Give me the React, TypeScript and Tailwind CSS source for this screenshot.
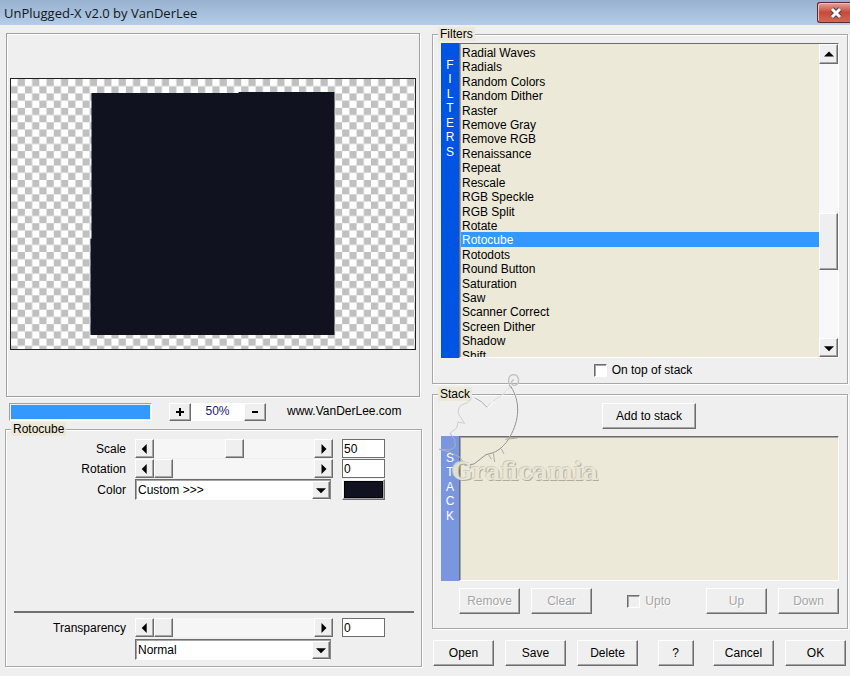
"use client"

import { useState, type ReactNode } from "react"
import { clsx } from "clsx"

const FILTERS = [
  "Radial Waves",
  "Radials",
  "Random Colors",
  "Random Dither",
  "Raster",
  "Remove Gray",
  "Remove RGB",
  "Renaissance",
  "Repeat",
  "Rescale",
  "RGB Speckle",
  "RGB Split",
  "Rotate",
  "Rotocube",
  "Rotodots",
  "Round Button",
  "Saturation",
  "Saw",
  "Scanner Correct",
  "Screen Dither",
  "Shadow",
  "Shift",
]

const RAISED =
  "bg-[#efefef] border border-t-white border-l-white border-r-[#6d6d6d] border-b-[#6d6d6d] shadow-[inset_-1px_-1px_0_#a5a5a5]"

type Direction = "left" | "right" | "up" | "down"

const ARROWS: Record<Direction, string> = {
  left: "M8 0v12L2 6z",
  right: "M3 0v12l6-6z",
  up: "M0 9h12L6 3z",
  down: "M0 4h12l-6 6z",
}

function Arrow({ direction }: { direction: Direction }) {
  return (
    <svg viewBox="0 0 12 12" className="h-[10px] w-[10px]" aria-hidden="true">
      <path d={ARROWS[direction]} fill="#000" />
    </svg>
  )
}

function PushButton({
  children,
  className,
  disabled,
}: {
  children: ReactNode
  className?: string
  disabled?: boolean
}) {
  return (
    <button
      type="button"
      disabled={disabled}
      className={clsx(
        RAISED,
        "flex h-[26px] items-center justify-center disabled:text-[#a5a5a5] disabled:[text-shadow:1px_1px_0_white]",
        className ?? "w-[61px]",
      )}
    >
      {children}
    </button>
  )
}

function Group({ title, children, className }: { title: string; children: ReactNode; className?: string }) {
  return (
    <fieldset className="min-w-0 border border-[#a8a8a8] shadow-[1px_1px_0_white,inset_1px_1px_0_white]">
      <legend className="ml-[5px] h-[14px] bg-[#ece9d8] px-[2px] leading-[14px]">{title}</legend>
      <div className={className}>{children}</div>
    </fieldset>
  )
}

function SliderRow({ id, label, initial }: { id: string; label: string; initial: number }) {
  const [value, setValue] = useState(initial)
  const clamp = (n: number) => Math.max(0, Math.min(100, n || 0))

  return (
    <>
      <label htmlFor={id} className="text-right">
        {label}
      </label>
      <div className="flex h-[19px]">
        <button
          type="button"
          aria-label={`Decrease ${label}`}
          onClick={() => setValue(clamp(value - 1))}
          className={clsx(RAISED, "flex w-[19px] shrink-0 items-center justify-center")}
        >
          <Arrow direction="left" />
        </button>
        <input
          id={id}
          type="range"
          value={value}
          onChange={(e) => setValue(Number(e.target.value))}
          className="h-full w-0 flex-1 appearance-none bg-[#f6f6f6] [&::-webkit-slider-thumb]:h-[19px] [&::-webkit-slider-thumb]:w-[19px] [&::-webkit-slider-thumb]:appearance-none [&::-webkit-slider-thumb]:border [&::-webkit-slider-thumb]:border-t-white [&::-webkit-slider-thumb]:border-l-white [&::-webkit-slider-thumb]:border-r-[#6d6d6d] [&::-webkit-slider-thumb]:border-b-[#6d6d6d] [&::-webkit-slider-thumb]:bg-[#efefef] [&::-webkit-slider-thumb]:shadow-[inset_-1px_-1px_0_#a5a5a5]"
        />
        <button
          type="button"
          aria-label={`Increase ${label}`}
          onClick={() => setValue(clamp(value + 1))}
          className={clsx(RAISED, "flex w-[19px] shrink-0 items-center justify-center")}
        >
          <Arrow direction="right" />
        </button>
      </div>
      <input
        type="text"
        aria-label={`${label} value`}
        value={value}
        onChange={(e) => setValue(clamp(Number(e.target.value)))}
        className="h-[19px] w-full border border-[#6d6d6d] bg-white px-px"
      />
    </>
  )
}

function Dropdown({ id, label, options }: { id: string; label: string; options: string[] }) {
  return (
    <div className="relative mr-[2px] h-[21px] border border-t-[#6d6d6d] border-l-[#6d6d6d] border-r-[#8a8a8a] border-b-white bg-white shadow-[inset_1px_1px_0_#a5a5a5]">
      <select id={id} aria-label={label} className="h-full w-full appearance-none bg-transparent pl-[2px] outline-none">
        {options.map((o) => (
          <option key={o}>{o}</option>
        ))}
      </select>
      <span
        className={clsx(
          RAISED,
          "pointer-events-none absolute top-px right-0 bottom-0 flex w-[18px] items-center justify-center",
        )}
      >
        <Arrow direction="down" />
      </span>
    </div>
  )
}

// Coloured bar with its word written downwards, one letter per row
function Strip({ word, className, wordClassName }: { word: string; className: string; wordClassName: string }) {
  return (
    <div className={clsx("w-[18px] shrink-0 pt-[15px] text-white", className)}>
      <div className={clsx("grid auto-rows-fr justify-items-center", wordClassName)}>
        {word.split("").map((letter, i) => (
          <span key={i}>{letter}</span>
        ))}
      </div>
    </div>
  )
}

function Preview() {
  return (
    <div className="mr-[2px] ml-px flex h-[364px] items-center border border-[#a0a0a0] px-[3px] pb-[3px] shadow-[1px_1px_0_white,inset_1px_1px_0_white]">
      <svg
        viewBox="0 0 405 270"
        preserveAspectRatio="xMidYMid slice"
        className="h-[272px] w-full border border-[#202020]"
        role="img"
        aria-label="Preview"
      >
        <defs>
          <pattern id="checker" width="14.42" height="14.42" patternUnits="userSpaceOnUse">
            <rect width="14.42" height="14.42" fill="#fff" />
            <path d="M7.21 0h7.21v7.21H7.21zM0 7.21h7.21v7.21H0z" fill="#c0c0c0" />
          </pattern>
        </defs>
        <rect width="405" height="270" fill="url(#checker)" />
        <path d="M81 14h147v-1h96v243H80v-96h1z" fill="#101220" />
      </svg>
    </div>
  )
}

// Embossed fairy outline with the site name under it
function Watermark() {
  return (
    <div className="pointer-events-none absolute -top-[17px] -left-[2px]">
      <svg viewBox="0 0 420 300" className="h-[100px] w-[140px]" fill="none" aria-hidden="true">
        <path d="M247 53C275 100 268 170 214 238M132 86Q157 94 174 113L236 58" stroke="#fff" strokeWidth="3" opacity="0.8" />
        <path
          d="M244 54C232 40 232 16 250 14C268 14 272 42 254 46C242 46 242 30 252 30"
          stroke="#c0c0c0"
          strokeWidth="4"
        />
        <path
          d="M243 50C272 96 268 150 240 200C226 226 208 240 190 248L168 254L132 282L104 286"
          stroke="#909090"
          strokeWidth="3"
        />
        <path d="M134 84Q156 92 171 112" stroke="#a8a8a8" strokeWidth="3" />
        <path d="M171 112L182 98M190 94L210 80L238 54" stroke="#d8d8d8" strokeWidth="3" />
        <path d="M124 84L112 98L92 106Q80 120 88 136L104 160L84 156L80 174L60 190" stroke="#cecece" strokeWidth="3" />
        <path d="M60 190L74 208L76 230L60 240L28 238L58 246L90 262L108 288" stroke="#a9b0c4" strokeWidth="3" />
        <path d="M226 208L262 204M214 236L222 252M190 250L194 276M176 254L184 268" stroke="#b0ada0" strokeWidth="3" />
      </svg>
      <p className="-mt-[12px] ml-[22px] font-['DejaVu_Serif',serif] text-[24px] leading-[28px] font-bold text-[#e9e6d6] opacity-90 [text-shadow:1px_1px_0_#a9a698,-1px_-1px_0_#cfccbe]">
        Graficamia
      </p>
    </div>
  )
}

export default function App() {
  const [selected, setSelected] = useState("Rotocube")

  return (
    <div className="flex min-h-screen flex-col bg-[#efefef] font-['Liberation_Sans',Arial,sans-serif] text-[12px] leading-[14px] text-black">
      <header className="flex h-[25px] items-start justify-between bg-linear-to-b from-[#97b1cf] to-[#b4cde8] pl-[4px]">
        <h1 className="font-['Open_Sans',sans-serif] text-[13px] leading-[26px] text-[#101820]">
          UnPlugged-X v2.0 by VanDerLee
        </h1>
        <button
          type="button"
          aria-label="Close"
          className="mt-[2px] flex h-[21px] w-[33px] items-center justify-center rounded-l-[3px] border border-r-0 border-[#5b2a30] bg-linear-to-b from-[#e0a197] via-[#c8483a] via-50% to-[#cf6a55] pl-[3px] shadow-[inset_1px_1px_0_#ecc0b8]"
        >
          <svg viewBox="0 0 14 12" className="h-[12px] w-[14px]" aria-hidden="true">
            <path d="M3 2l8 8M11 2l-8 8" stroke="#5a3a48" strokeWidth="5" />
            <path d="M3 2l8 8M11 2l-8 8" stroke="#fff" strokeWidth="3" />
          </svg>
        </button>
      </header>

      <main className="grid grid-cols-[417fr_416fr] gap-[10px] pt-[2px] pr-[2px] pl-[5px]">
        {/* Preview and filter settings */}
        <section className="flex min-w-0 flex-col pt-[6px]">
          <Preview />

          <div className="flex h-[25px] items-start pt-[6px] pl-[4px]">
            <div
              role="progressbar"
              aria-label="Progress"
              aria-valuenow={100}
              className="h-[18px] w-[143px] border border-t-[#a0a0a0] border-l-[#a0a0a0] border-r-white border-b-white p-px"
            >
              <div className="h-full bg-[#3399ff]" />
            </div>
            <div className="ml-[17px] flex h-[18px] w-[97px]">
              <button type="button" aria-label="Zoom in" className={clsx(RAISED, "flex w-[22px] items-center justify-center")}>
                <svg viewBox="0 0 8 8" className="h-[8px] w-[8px]" aria-hidden="true">
                  <path d="M4 0v8M0 4h8" stroke="#000" strokeWidth="2" />
                </svg>
              </button>
              <output className="flex-1 bg-white text-center leading-[17px] text-[#1a1a6e]">50%</output>
              <button type="button" aria-label="Zoom out" className={clsx(RAISED, "flex w-[22px] items-center justify-center")}>
                <svg viewBox="0 0 8 8" className="h-[8px] w-[8px]" aria-hidden="true">
                  <path d="M1 4h6" stroke="#000" strokeWidth="2" />
                </svg>
              </button>
            </div>
            <a href="#" className="ml-[21px] leading-[16px]">
              www.VanDerLee.com
            </a>
          </div>

          <Group title="Rotocube" className="flex min-h-[230px] flex-col">
            <div className="grid grid-cols-[120px_1fr_43px] items-center gap-x-[9px] gap-y-px pt-[3px] pr-[36px]">
              <SliderRow id="scale" label="Scale" initial={50} />
              <SliderRow id="rotation" label="Rotation" initial={0} />
              <label htmlFor="color" className="text-right">
                Color
              </label>
              <Dropdown id="color" label="Color" options={["Custom >>>"]} />
              <button type="button" aria-label="Pick color" className={clsx(RAISED, "h-[21px] p-px")}>
                <span className="block h-full border border-black bg-[#101220]" />
              </button>
            </div>

            <hr className="mt-auto mr-[7px] ml-[8px] border-t-2 border-[#707070]" />
            <div className="grid grid-cols-[120px_1fr_43px] items-center gap-x-[9px] gap-y-[2px] pt-[5px] pr-[36px] pb-[6px]">
              <SliderRow id="transparency" label="Transparency" initial={0} />
              <div className="col-start-2">
                <Dropdown id="blend" label="Blend mode" options={["Normal"]} />
              </div>
            </div>
          </Group>
        </section>

        {/* Filter list and stack */}
        <section className="flex min-w-0 flex-col">
          <Group title="Filters" className="px-[8px] pt-[2px] pb-px">
            <div className="flex h-[315px]">
              <Strip word="FILTERS" className="bg-[#0054e3]" wordClassName="h-[101px]" />
              <div className="flex min-w-0 flex-1 border border-t-[#6d6d6d] border-l-[#6d6d6d] border-r-white border-b-white bg-[#ece9d8]">
                <div className="min-w-0 flex-1 overflow-hidden border-l border-[#a5a5a5] pt-px">
                  <ul
                    role="listbox"
                    aria-label="Filters"
                    className="grid h-[317px] grid-rows-[repeat(22,minmax(0,1fr))] leading-[16px]"
                  >
                    {FILTERS.map((name) => (
                      <li
                        key={name}
                        role="option"
                        aria-selected={name === selected}
                        onClick={() => setSelected(name)}
                        className={clsx("pl-px", name === selected && "bg-[#3399ff] text-white")}
                      >
                        {name}
                      </li>
                    ))}
                  </ul>
                </div>
                <div className="flex w-[19px] shrink-0 flex-col bg-[#f8f8f8]">
                  <button type="button" aria-label="Scroll up" className={clsx(RAISED, "flex h-[20px] items-center justify-center")}>
                    <Arrow direction="up" />
                  </button>
                  <div className="flex-[149]" />
                  <div className={clsx(RAISED, "h-[57px]")} />
                  <div className="flex-[68]" />
                  <button type="button" aria-label="Scroll down" className={clsx(RAISED, "flex h-[19px] items-center justify-center")}>
                    <Arrow direction="down" />
                  </button>
                </div>
              </div>
            </div>
            <label className="flex h-[24px] items-center justify-center gap-[5px] pl-[6px]">
              <input
                type="checkbox"
                className="h-[13px] w-[13px] appearance-none border border-t-[#6d6d6d] border-l-[#6d6d6d] border-r-white border-b-white bg-white shadow-[inset_1px_1px_0_#a5a5a5] checked:bg-[#3399ff]"
              />
              On top of stack
            </label>
          </Group>

          <div className="relative mt-[3px]">
            <Group title="Stack" className="px-[8px] pt-[2px] pb-[14px]">
              <div className="flex justify-center pl-[18px]">
                <PushButton className="w-[94px]">Add to stack</PushButton>
              </div>
              <div className="mt-[7px] flex h-[145px]">
                <Strip word="STACK" className="bg-[#7a96df]" wordClassName="h-[72px]" />
                <div
                  role="listbox"
                  aria-label="Stack"
                  className="flex-1 border border-t-[#6d6d6d] border-l-[#6d6d6d] border-r-white border-b-white bg-[#ece9d8] shadow-[inset_1px_1px_0_#a5a5a5]"
                />
              </div>
              <div className="mt-[7px] flex items-center gap-[11px] pl-[18px]">
                <PushButton disabled>Remove</PushButton>
                <PushButton disabled>Clear</PushButton>
                <label className="mx-auto flex items-center gap-[5px] text-[#a5a5a5] [text-shadow:1px_1px_0_white]">
                  <input
                    type="checkbox"
                    disabled
                    className="h-[13px] w-[13px] appearance-none border border-t-[#6d6d6d] border-l-[#6d6d6d] border-r-white border-b-white shadow-[inset_1px_1px_0_#a5a5a5]"
                  />
                  Upto
                </label>
                <PushButton disabled>Up</PushButton>
                <PushButton disabled>Down</PushButton>
              </div>
            </Group>
            <Watermark />
          </div>

          <div className="flex justify-between pt-[11px] pr-[2px] pl-px">
            <div className="flex gap-[11px]">
              <PushButton>Open</PushButton>
              <PushButton>Save</PushButton>
              <PushButton>Delete</PushButton>
            </div>
            <PushButton className="w-[36px]">?</PushButton>
            <div className="flex gap-[11px]">
              <PushButton>Cancel</PushButton>
              <PushButton>OK</PushButton>
            </div>
          </div>
        </section>
      </main>
    </div>
  )
}
